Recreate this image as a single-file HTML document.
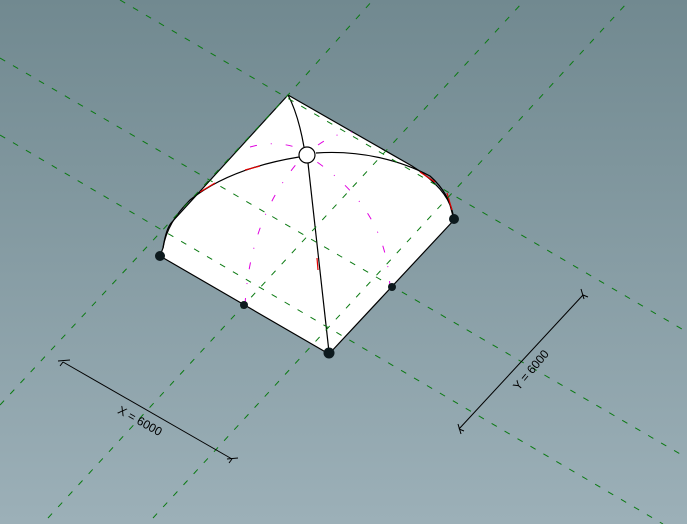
<!DOCTYPE html>
<html><head><meta charset="utf-8"><style>
html,body{margin:0;padding:0;width:687px;height:524px;overflow:hidden}
svg{display:block}
</style></head><body>
<svg width="687" height="524" viewBox="0 0 687 524" xmlns="http://www.w3.org/2000/svg">
<defs><linearGradient id="bg" x1="0" y1="0" x2="0" y2="1">
<stop offset="0" stop-color="#718990"/><stop offset="1" stop-color="#9cb0b8"/></linearGradient></defs>
<rect width="687" height="524" fill="url(#bg)"/>
<path d="M288,95 L412,166 C428,176 444,190 450,205 L454,220 L329,354 L160,256 L163,248 C165,235 168,226 172,222 Z" fill="#ffffff" stroke="#000" stroke-width="1.2"/>
<g fill="none" stroke-width="1.2">
<path d="M299,157 C250,165 215,180 190,200 C175,215 166,230 163,248" stroke="#000"/>
<path d="M316,153 C360,150 400,160 430,176 C446,190 452,205 454,220" stroke="#000"/>
<path d="M288,95 C296,110 301,130 304,147" stroke="#000"/>
<path d="M308,163 L329,352" stroke="#000"/>
<path d="M200,192 L215,183 M245,170 L260,166 M420,172 L435,182 M447,193 L452,210 M317,258 L318,270" stroke="#e00000"/>
</g>
<circle cx="307" cy="155" r="8" fill="#fff" stroke="#000" stroke-width="1.2"/>
<g fill="none" stroke="#e000e0" stroke-width="1" stroke-dasharray="7 14 1 14">
<path d="M245,305 C248,255 262,205 298,162"/>
<path d="M250,147 Q275,140 298,148"/>
<path d="M390,288 C388,240 368,198 317,162"/>
<path d="M318,145 Q333,134 352,132"/>
</g>
<g fill="none" stroke="#0b7a12" stroke-width="1" stroke-dasharray="6 9">
<path d="M120,0 L687,332"/>
<path d="M0,58 L687,458"/>
<path d="M0,135 L663,524"/>
<path d="M0,405 L288,95 L373,0"/>
<path d="M48,518 L522,3"/>
<path d="M153,518 L627,3"/>
</g>
<g fill="#0d1a1e">
<circle cx="160" cy="256" r="5"/>
<circle cx="329" cy="353" r="5.5"/>
<circle cx="454" cy="219" r="5"/>
<circle cx="244" cy="305" r="4"/>
<circle cx="392" cy="287" r="4"/>
</g>
<g stroke="#000" stroke-width="1" fill="none">
<path d="M63,362 L232,459"/>
<path d="M58,361 L70,360 M63,362 L60,366"/>
<path d="M227,459 L238,458 M232,459 L229,463"/>
<path d="M583,295 L459,429"/>
<path d="M581,289 L584,299 M583,295 L588,297"/>
<path d="M458,424 L461,434 M459,429 L464,431"/>
</g>
<g font-family="Liberation Sans, sans-serif" font-size="12" fill="#000">
<text x="140" y="425" text-anchor="middle" transform="rotate(29 140 421)">X = 6000</text>
<text x="531" y="374" text-anchor="middle" transform="rotate(-50 531 370)">Y = 6000</text>
</g>
</svg>
</body></html>
